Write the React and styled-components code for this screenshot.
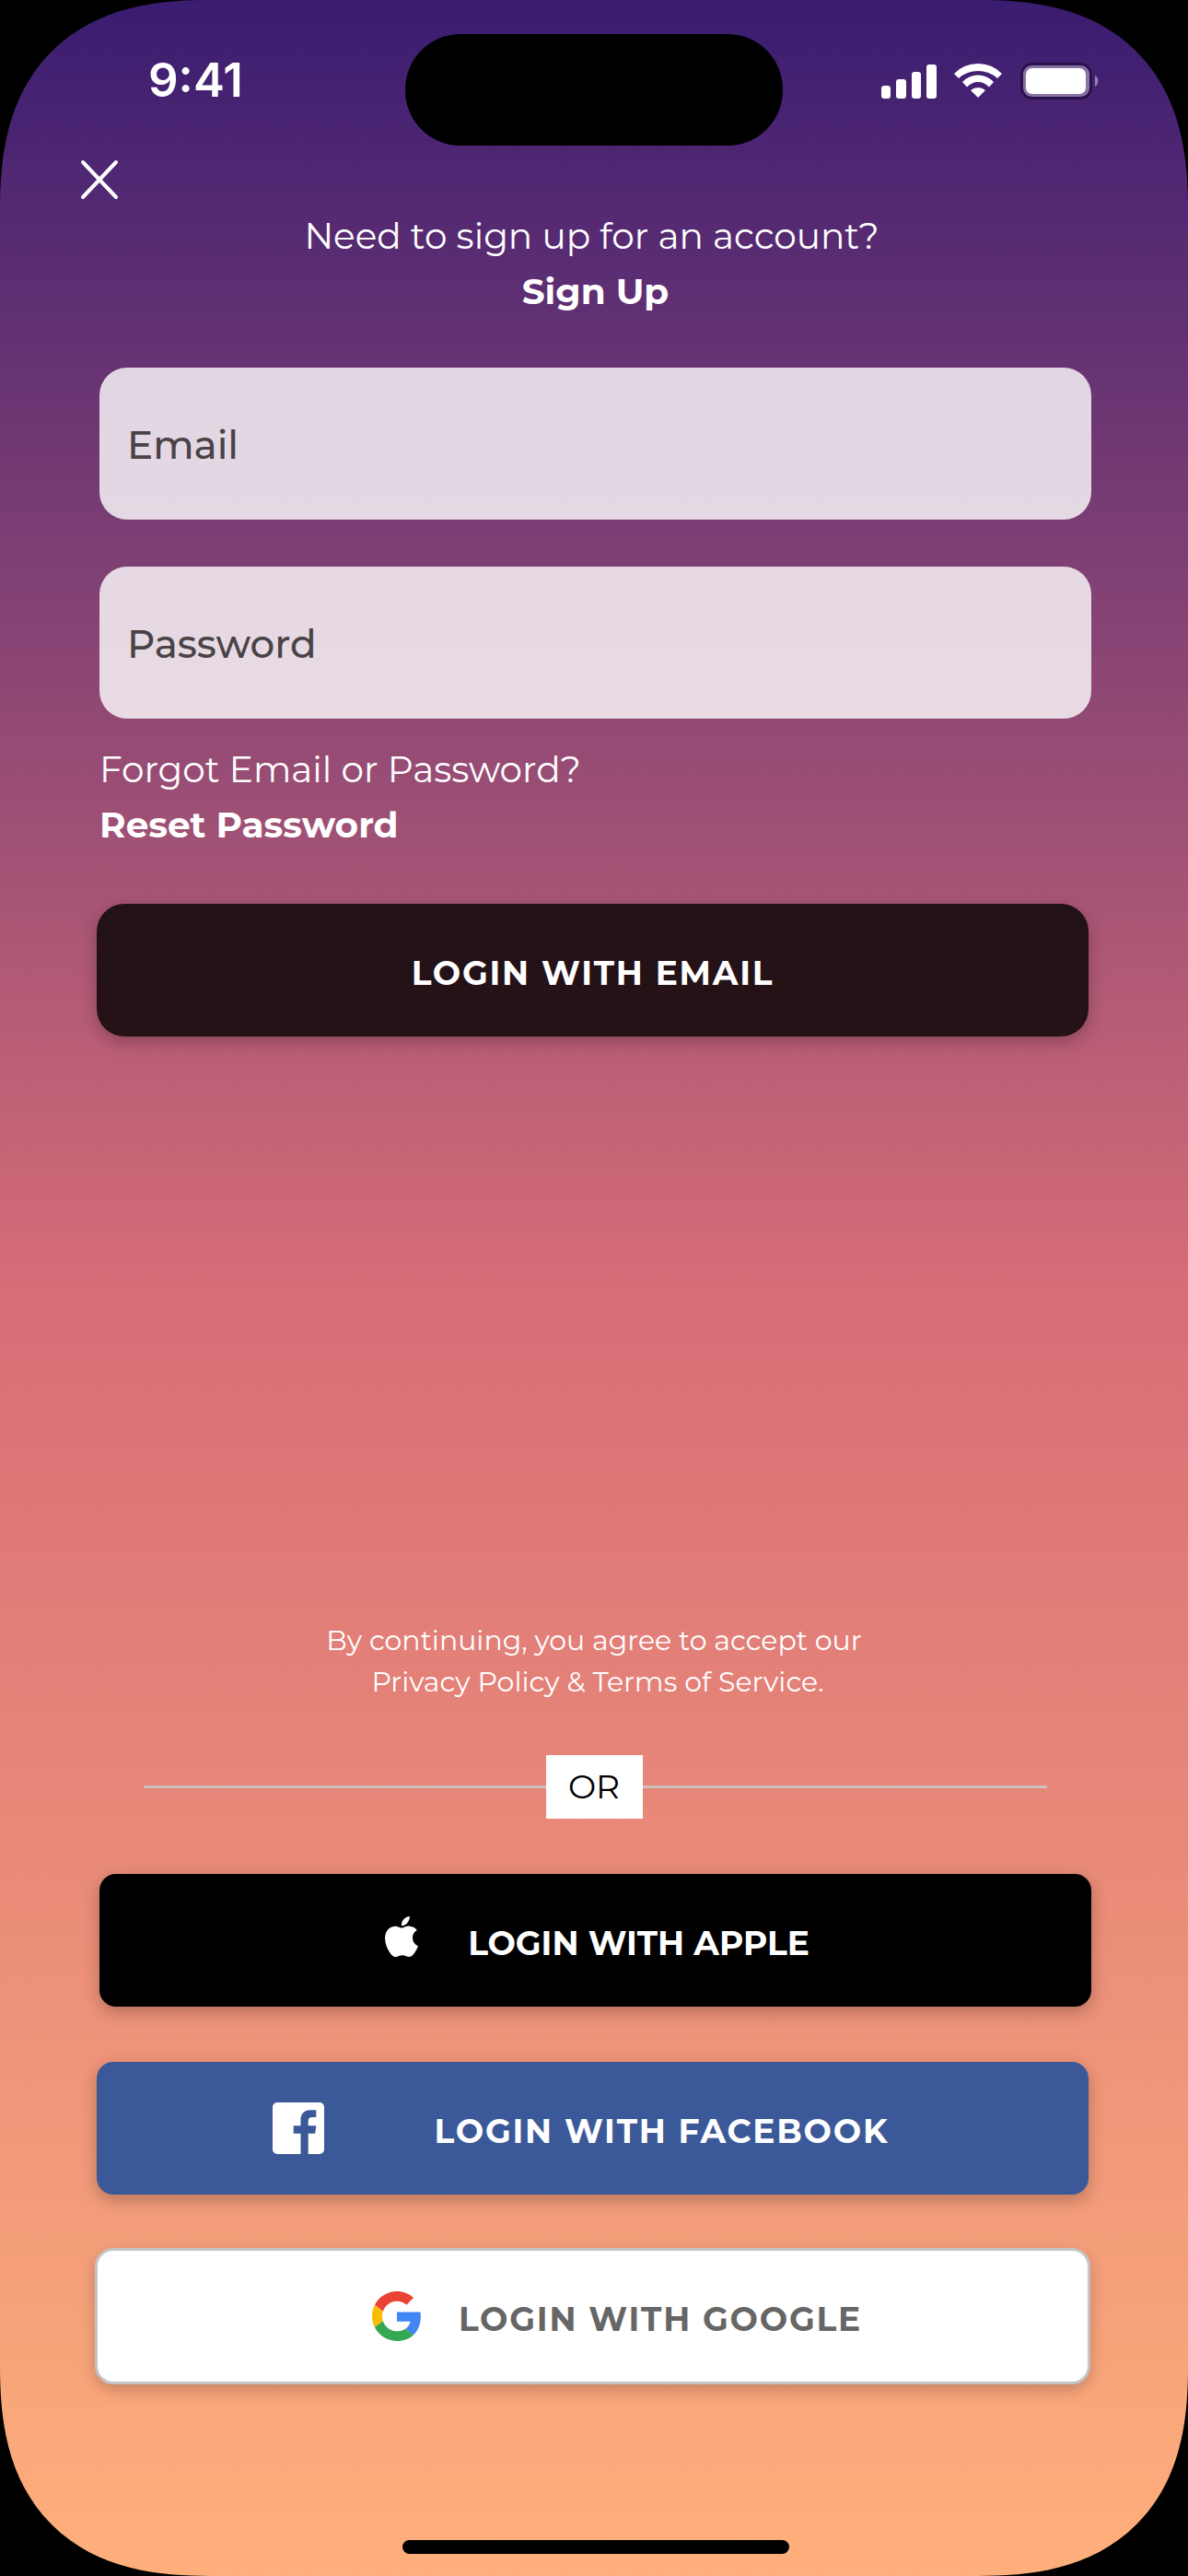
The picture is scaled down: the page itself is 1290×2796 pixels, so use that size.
import React from "react";
import styled, { createGlobalStyle } from "styled-components";

const GlobalStyle = createGlobalStyle`
  *, *::before, *::after { box-sizing: border-box; }
  body {
    margin: 0;
    background: #000;
    color: #fff;
    font-family: Montserrat, Inter, "Open Sans", sans-serif;
  }
  button, input { font: inherit; color: inherit; }
`;

const Screen = styled.main`
  display: flex;
  flex-direction: column;
  min-height: 100vh;
  padding: 37px 105px 24px;
  background: linear-gradient(180deg, #3a1c71 0%, #d76d77 50%, #ffaf7b 100%);
  border-radius: 188px;

  @supports (corner-shape: superellipse(1.3)) {
    border-radius: 228px;
    corner-shape: superellipse(1.3);
  }
`;

const StatusBar = styled.header`
  display: grid;
  grid-template-columns: 1fr 410px 1fr;
`;

const Time = styled.time`
  padding-left: 56px;
  font-family: Inter, sans-serif;
  font-size: 51px;
  font-weight: 600;
  line-height: 100px;
`;

const Island = styled.div`
  height: 121px;
  border-radius: 60px;
  background: #000;
`;

const StatusIcons = styled.svg`
  justify-self: end;
  width: 237px;
  height: 40px;
  margin: 31px -8px 0 0;
`;

const CloseButton = styled.button`
  display: grid;
  place-items: center;
  align-self: flex-start;
  width: 60px;
  height: 60px;
  margin: 7px 0 1px -27px;
  padding: 0;
  border: 0;
  background: none;
  cursor: pointer;

  svg { width: 42px; height: 44px; }
`;

const Prompt = styled.div`
  display: flex;
  flex-direction: column;
  align-items: ${(p) => (p.$centered ? "center" : "flex-start")};
  padding-left: 3px;
  font-size: 39px;
  font-weight: 400;
  line-height: 60px;

  p {
    margin: 0;
    padding-right: 8px;
  }
`;

const StrongLink = styled.a`
  color: inherit;
  font-weight: 700;
  text-decoration: none;
`;

const LoginForm = styled.form`
  display: flex;
  flex-direction: column;
  margin-top: 53px;
`;

const Fields = styled.div`
  display: grid;
  gap: 51px;
  margin: 0 0 25px 3px;
`;

const Field = styled.input`
  width: 100%;
  height: 165px;
  padding: 2px 30px 0;
  border: 0;
  border-radius: 30px;
  background: rgba(255, 255, 255, 0.8);
  color: #494346;
  font-size: 42px;
  font-weight: 500;
  outline: none;

  &::placeholder { color: #494346; opacity: 1; }
`;

const Button = styled.button`
  display: flex;
  align-items: center;
  justify-content: center;
  gap: ${(p) => p.$gap || 0}px;
  height: 144px;
  margin-left: ${(p) => (p.$inset ? 3 : 0)}px;
  margin-right: ${(p) => (p.$inset ? 0 : 3)}px;
  padding: 0 ${(p) => p.$right || 0}px 0 ${(p) => p.$left || 0}px;
  border: 0;
  border-radius: ${(p) => p.$radius || 18}px;
  outline: ${(p) => (p.$outlined ? "3px solid #c4c4c4" : "none")};
  outline-offset: -1px;
  background: ${(p) => p.$bg};
  box-shadow: 0 6px 18px rgba(0, 0, 0, 0.25);
  color: ${(p) => p.$color || "#fff"};
  font-size: 36px;
  font-weight: 700;
  letter-spacing: ${(p) => (p.$tight ? "normal" : "0.05em")};
  cursor: pointer;

  span { padding-top: 6px; }
`;

const EmailButton = styled(Button)`
  margin-top: 56px;
`;

const Footer = styled.section`
  display: flex;
  flex-direction: column;
  margin-top: auto;
`;

const Terms = styled.p`
  margin: 0;
  font-size: 30px;
  font-weight: 400;
  line-height: 45px;
  text-align: center;

  a { color: inherit; text-decoration: none; }
`;

const TermsLinks = styled.span`
  display: block;
  padding-left: 8px;
`;

const Divider = styled.div`
  display: flex;
  align-items: center;
  margin: 57px 48px 60px 51px;

  &::before, &::after {
    content: "";
    flex: 1 1 0;
    height: 3px;
    background: #cfbfbb;
  }

  &::after { flex-basis: 3px; }

  span {
    width: 105px;
    background: #fff;
    color: #000;
    font-size: 36px;
    font-weight: 400;
    line-height: 69px;
    text-align: center;
  }
`;

const Providers = styled.div`
  display: grid;
  gap: 60px;
`;

const AppleIcon = styled.svg`
  width: 36px;
  height: 44px;
  margin-bottom: 8px;
`;

const FacebookIcon = styled.svg`
  width: 56px;
  height: 56px;
`;

const GoogleIcon = styled.svg`
  width: 54px;
  height: 54px;
`;

const HomeIndicator = styled.div`
  align-self: center;
  width: 420px;
  height: 15px;
  margin: 171px 0 0 3px;
  border-radius: 8px;
  background: #000;
`;

export default function App() {
  return (
    <>
      <GlobalStyle />
      <Screen>
        <StatusBar>
          <Time>9:41</Time>
          <Island />
          <StatusIcons viewBox="0 0 237 40" fill="#fff" aria-hidden="true">
            <rect x="1" y="25" width="10" height="14" rx="3" />
            <rect x="17" y="18" width="11" height="21" rx="3" />
            <rect x="34" y="10" width="10" height="29" rx="3" />
            <rect x="50" y="2" width="11" height="37" rx="3" />
            <g transform="translate(80 1)">
              <path d="M0 11A36 36 0 0 1 52 11L47 16A31.500 31.500 0 0 0 5 16Z" />
              <path d="M9 20A23 23 0 0 1 43 20L38 25.500A16 16 0 0 0 14 25.500Z" />
              <path d="M18 29A12 12 0 0 1 34 29L26 37Z" />
            </g>
            <rect x="153.500" y="1.500" width="75" height="37" rx="11" fill="#8973a3" stroke="#2b124f" strokeWidth="3" />
            <rect x="158" y="6" width="65" height="28" rx="7" />
            <path d="M233 14a7 7 0 0 1 0 12z" fill="#9580ad" />
          </StatusIcons>
        </StatusBar>

        <CloseButton type="button" aria-label="Close">
          <svg viewBox="0 0 42 44" fill="none" stroke="#fff" strokeWidth="4" strokeLinecap="round">
            <path d="M3 3l36 38M39 3L3 41" />
          </svg>
        </CloseButton>

        <Prompt $centered>
          <p>Need to sign up for an account?</p>
          <StrongLink href="#signup">Sign Up</StrongLink>
        </Prompt>

        <LoginForm onSubmit={(e) => e.preventDefault()}>
          <Fields>
            <Field type="email" placeholder="Email" aria-label="Email" />
            <Field type="password" placeholder="Password" aria-label="Password" />
          </Fields>
          <Prompt>
            <p>Forgot Email or Password?</p>
            <StrongLink href="#reset">Reset Password</StrongLink>
          </Prompt>
          <EmailButton type="submit" $bg="rgba(0, 0, 0, 0.8)" $radius={30}>
            <span>LOGIN WITH EMAIL</span>
          </EmailButton>
        </LoginForm>

        <Footer>
          <Terms>
            By continuing, you agree to accept our
            <TermsLinks>
              <a href="#privacy">Privacy Policy</a> &amp; <a href="#terms">Terms of Service.</a>
            </TermsLinks>
          </Terms>
          <Divider><span>OR</span></Divider>
          <Providers>
            <Button type="button" $bg="#000" $inset $tight $gap={54} $left={4}>
              <AppleIcon viewBox="2.200 0 19.600 24" fill="#fff" aria-hidden="true">
                <path d="M12.152 6.896c-.948 0-2.415-1.078-3.960-1.040-2.040.027-3.910 1.183-4.961 3.014-2.117 3.675-.546 9.103 1.519 12.090 1.013 1.454 2.208 3.090 3.792 3.039 1.520-.065 2.090-.987 3.935-.987 1.831 0 2.350.987 3.960.948 1.637-.026 2.676-1.480 3.676-2.948 1.156-1.688 1.636-3.325 1.662-3.415-.039-.013-3.182-1.221-3.220-4.857-.026-3.040 2.480-4.494 2.597-4.559-1.429-2.090-3.623-2.324-4.390-2.376-2-.156-3.675 1.090-4.610 1.090zM15.530 3.830c.843-1.012 1.400-2.427 1.245-3.830-1.207.052-2.662.805-3.532 1.818-.780.896-1.454 2.338-1.273 3.714 1.338.104 2.715-.688 3.559-1.701" />
              </AppleIcon>
              <span>LOGIN WITH APPLE</span>
            </Button>
            <Button type="button" $bg="#3b5998" $gap={120} $right={26}>
              <FacebookIcon viewBox="0 0 56 56" fill="#fff" aria-hidden="true">
                <path d="M5 0H51a5 5 0 0 1 5 5V51a5 5 0 0 1-5 5H38.700V33.700H46.200L47.300 25.300H38.700V20.500C38.700 17.500 40 16 43 16H47.300V8.300H41C34 8.300 30.500 12.500 30.500 19V25.300H22.700V33.700H30.500V56H5a5 5 0 0 1-5-5V5a5 5 0 0 1 5-5Z" />
              </FacebookIcon>
              <span>LOGIN WITH FACEBOOK</span>
            </Button>
            <Button type="button" $bg="#fff" $color="#666" $outlined $gap={40} $left={53}>
              <GoogleIcon viewBox="0 0 48 48" aria-hidden="true">
                <path fill="#EA4335" d="M24 9.500c3.540 0 6.710 1.220 9.210 3.600l6.850-6.850C35.900 2.380 30.470 0 24 0 14.620 0 6.510 5.380 2.560 13.220l7.980 6.190C12.430 13.720 17.740 9.500 24 9.500z" />
                <path fill="#4285F4" d="M46.980 24.550c0-1.570-.150-3.090-.380-4.550H24v9.020h12.940c-.580 2.960-2.260 5.480-4.780 7.180l7.730 6c4.510-4.180 7.090-10.360 7.090-17.650z" />
                <path fill="#FBBC05" d="M10.530 28.590c-.480-1.450-.760-2.990-.760-4.590s.270-3.140.760-4.590l-7.980-6.190C.920 16.460 0 20.120 0 24c0 3.880.920 7.540 2.560 10.780l7.970-6.190z" />
                <path fill="#34A853" d="M24 48c6.480 0 11.930-2.130 15.890-5.810l-7.730-6c-2.150 1.450-4.920 2.300-8.160 2.300-6.260 0-11.570-4.220-13.470-9.910l-7.980 6.190C6.510 42.620 14.620 48 24 48z" />
              </GoogleIcon>
              <span>LOGIN WITH GOOGLE</span>
            </Button>
          </Providers>
        </Footer>
        <HomeIndicator />
      </Screen>
    </>
  );
}
